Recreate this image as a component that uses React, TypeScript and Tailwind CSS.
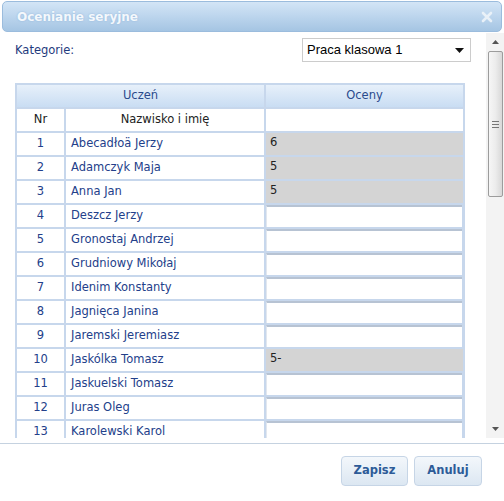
import React from "react";

const rows: { nr: number; name: string; grade?: string }[] = [
  { nr: 1, name: "Abecadłoä Jerzy", grade: "6" },
  { nr: 2, name: "Adamczyk Maja", grade: "5" },
  { nr: 3, name: "Anna Jan", grade: "5" },
  { nr: 4, name: "Deszcz Jerzy" },
  { nr: 5, name: "Gronostaj Andrzej" },
  { nr: 6, name: "Grudniowy Mikołaj" },
  { nr: 7, name: "Idenim Konstanty" },
  { nr: 8, name: "Jagnięca Janina" },
  { nr: 9, name: "Jaremski Jeremiasz" },
  { nr: 10, name: "Jaskólka Tomasz", grade: "5-" },
  { nr: 11, name: "Jaskuelski Tomasz" },
  { nr: 12, name: "Juras Oleg" },
  { nr: 13, name: "Karolewski Karol" },
];

export default function App() {
  return (
    <div className="w-[504px] h-[501px] bg-white overflow-hidden flex flex-col font-['DejaVu_Sans',sans-serif] text-[11.5px]">
      {/* Title bar */}
      <div className="mx-[2px] mt-[1px] h-[31px] shrink-0 rounded-[5px] border border-[#9bbcdd] bg-gradient-to-b from-[#d3e5f6] via-[#bcd5ed] to-[#a5c5e3] flex items-center justify-between pl-[14px] pr-[8px]">
        <span className="text-[12px] font-bold text-[#f4f8fc] [text-shadow:0_0_2px_#8fb4da]">
          Ocenianie seryjne
        </span>
        <svg width="12" height="12" viewBox="0 0 12 12" className="opacity-90">
          <path d="M2 2 L10 10 M10 2 L2 10" stroke="#eef4fa" strokeWidth="2.6" strokeLinecap="round" />
        </svg>
      </div>

      {/* Body */}
      <div className="h-[405px] mt-[1px] shrink-0 flex">
        <div className="flex-1 overflow-hidden pl-[15px] pr-[15px] pt-[5px]">
          <div className="flex items-center justify-between h-[24px]">
            <span className="text-[#1f3b7e] pt-[1px]">Kategorie:</span>
            <div className="w-[169px] h-[24px] border border-[#cccccc] bg-white flex items-center justify-between pl-[4px] pr-[6px] font-['Liberation_Sans',sans-serif] text-[13px] text-black">
              <span>Praca klasowa 1</span>
              <svg width="9" height="5" viewBox="0 0 9 5">
                <path d="M0 0 H9 L4.5 5 Z" fill="#111" />
              </svg>
            </div>
          </div>

          <div className="mt-[21px] w-[450px] bg-[#c7d7ec] p-[2px] grid grid-cols-[47px_198px_197px] gap-[2px]">
            <div className="col-span-2 h-[22px] bg-gradient-to-b from-[#e7f0fa] to-[#c9ddf3] flex items-center justify-center text-[#2a4a8c]">
              Uczeń
            </div>
            <div className="h-[22px] bg-gradient-to-b from-[#e7f0fa] to-[#c9ddf3] flex items-center justify-center text-[#2a4a8c]">
              Oceny
            </div>

            <div className="h-[22px] bg-white flex items-center justify-center text-[#222]">Nr</div>
            <div className="h-[22px] bg-white flex items-center justify-center text-[#222]">Nazwisko i imię</div>
            <div className="h-[22px] bg-white" />

            {rows.map((r) => (
              <React.Fragment key={r.nr}>
                <div className="h-[22px] bg-white flex items-center justify-center text-[#23408a]">{r.nr}</div>
                <div className="h-[22px] bg-white flex items-center pl-[5px] text-[#23408a]">{r.name}</div>
                {r.grade ? (
                  <div className="h-[22px] bg-[#d4d4d4] pl-[4px] pt-[1px] leading-[16px] text-[#222]">{r.grade}</div>
                ) : (
                  <div className="h-[22px] bg-white border-t-[2px] border-t-[#b7c3d3] border-l border-l-[#e2e7ee] mr-[1px]" />
                )}
              </React.Fragment>
            ))}
          </div>
        </div>

        {/* Scrollbar */}
        <div className="w-[18px] shrink-0 bg-[#f3f3f3] flex flex-col items-center">
          <div className="h-[18px] flex items-center justify-center">
            <svg width="7" height="4" viewBox="0 0 7 4">
              <path d="M0 4 L3.5 0 L7 4 Z" fill="#555" />
            </svg>
          </div>
          <div className="w-[15px] h-[146px] rounded-[2px] border border-[#9c9c9c] bg-gradient-to-r from-[#f6f6f6] via-[#ececec] to-[#d8d8d8] flex flex-col items-center justify-center gap-[2px]">
            <div className="w-[7px] h-px bg-[#777]" />
            <div className="w-[7px] h-px bg-[#777]" />
            <div className="w-[7px] h-px bg-[#777]" />
          </div>
          <div className="flex-1" />
          <div className="h-[18px] flex items-center justify-center">
            <svg width="7" height="4" viewBox="0 0 7 4">
              <path d="M0 0 L7 0 L3.5 4 Z" fill="#555" />
            </svg>
          </div>
        </div>
      </div>

      {/* Footer */}
      <div className="mt-[5px] border-t border-[#c5d2e0] flex justify-end gap-[6px] pr-[22px] pt-[12px]">
        <button className="w-[67px] h-[30px] rounded-[4px] border border-[#c6d5e6] bg-gradient-to-b from-[#f3f7fb] to-[#dce7f2] font-bold text-[11.5px] text-[#2d5b98]">
          Zapisz
        </button>
        <button className="w-[68px] h-[30px] rounded-[4px] border border-[#c6d5e6] bg-gradient-to-b from-[#f3f7fb] to-[#dce7f2] font-bold text-[11.5px] text-[#2d5b98]">
          Anuluj
        </button>
      </div>
    </div>
  );
}
